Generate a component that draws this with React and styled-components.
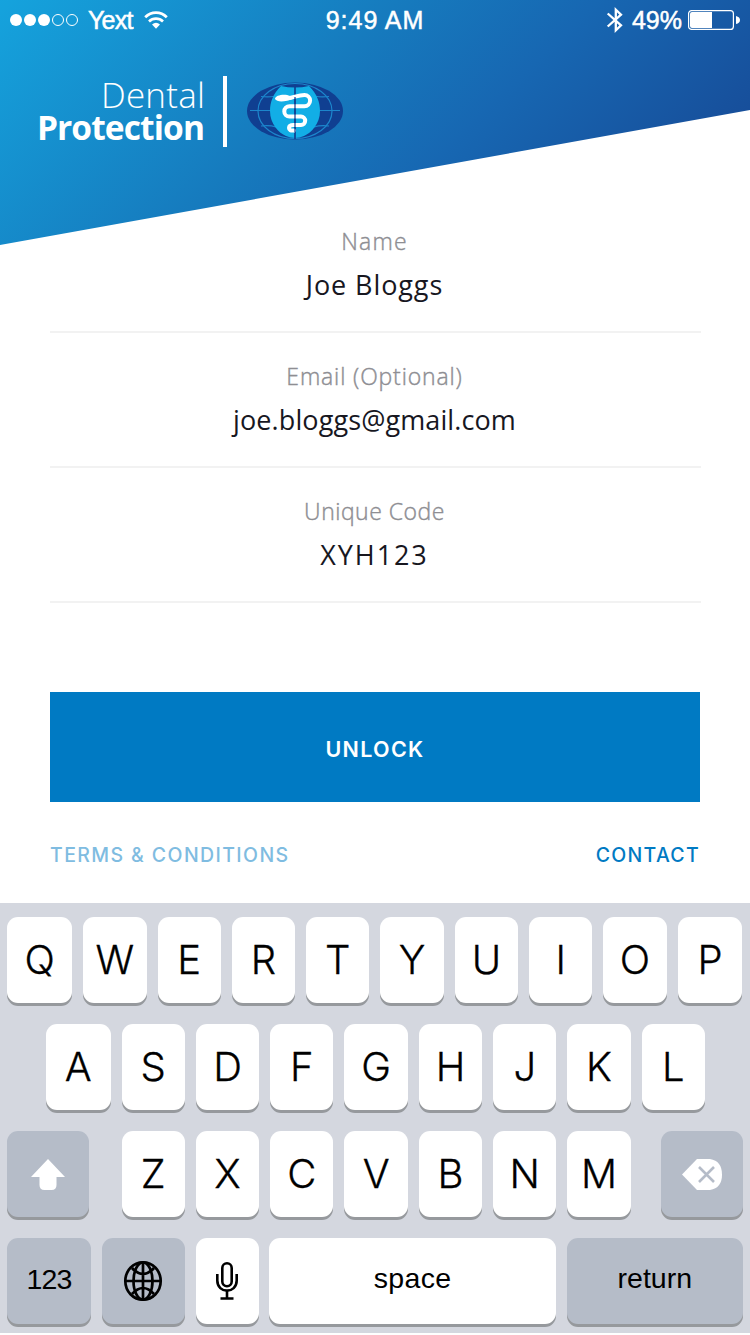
import React from "react";
import styled, { createGlobalStyle } from "styled-components";

const Global = createGlobalStyle`
  *, *::before, *::after { box-sizing: border-box; }
  body { margin: 0; background: #fff; overflow: hidden; }
  button { font: inherit; border: 0; padding: 0; margin: 0; }
`;

const brand = `"Open Sans", "Noto Sans", sans-serif`;
const caps = `Inter, "Open Sans", sans-serif`;
const system = `"Liberation Sans", Arial, sans-serif`;

const Screen = styled.main`
  width: 750px;
  height: 1335px;
  display: flex;
  flex-direction: column;
  background: #fff;
  font-family: ${brand};
`;

const Header = styled.header`
  height: 245px;
  flex: none;
  color: #fff;
  background: linear-gradient(135deg, #15a3dd 0%, #167bbe 40%, #1767b2 60%, #174f9b 86%, #174690 100%);
  clip-path: polygon(0 0, 100% 0, 100% 110px, 0 100%);
`;

const StatusBar = styled.div`
  height: 40px;
  display: grid;
  grid-template-columns: 1fr auto 1fr;
  align-items: center;
  padding: 0 10px;
  font: 25px/40px ${system};
  -webkit-text-stroke: 0.5px #fff;
`;

const StatusGroup = styled.div`
  display: flex;
  align-items: center;
  justify-content: ${(p) => (p.$end ? "flex-end" : "flex-start")};
`;

const StatusText = styled.span`
  letter-spacing: ${(p) => p.$track || 0}px;
  margin: 0 ${(p) => p.$right || 0}px 0 ${(p) => p.$left || 0}px;
`;

const Icon = styled.svg`
  display: block;
  flex: none;
  overflow: visible;
  margin-top: ${(p) => p.$top || 0}px;
  margin-right: ${(p) => p.$right || 0}px;
`;

const BrandRow = styled.div`
  display: flex;
  align-items: flex-start;
  padding: 36px 0 0 38px;
`;

const BrandName = styled.div`
  width: 167px;
  padding-top: 3px;
  display: flex;
  flex-direction: column;
  align-items: flex-end;
`;

const BrandWord = styled.span`
  font-size: ${(p) => (p.$strong ? 33.5 : 35)}px;
  font-weight: ${(p) => (p.$strong ? 700 : 300)};
  line-height: 32px;
  letter-spacing: ${(p) => p.$track}px;
  margin-right: ${(p) => p.$nudge || 0}px;
  white-space: nowrap;
`;

const BrandRule = styled.div`
  width: 4px;
  height: 71px;
  margin: 0 20px 0 18px;
  background: #fff;
`;

const Form = styled.form`
  margin: -47px 49px 0 50px;
  display: flex;
  flex-direction: column;
  position: relative;
`;

const Field = styled.label`
  height: 135px;
  padding: 28px 2px 0 0;
  display: flex;
  flex-direction: column;
  align-items: center;
  border-bottom: 2px solid #f2f2f2;
`;

const FieldLabel = styled.span`
  font-size: 23px;
  line-height: 31px;
  color: #8e8e93;
  font-weight: 300;
  -webkit-text-stroke: 0.4px #8e8e93;
  letter-spacing: ${(p) => p.$track}px;
`;

const FieldValue = styled.span`
  font-size: 27px;
  line-height: 40px;
  margin-top: 8px;
  color: #17171f;
  letter-spacing: ${(p) => p.$track}px;
`;

const UnlockButton = styled.button`
  width: 650px;
  height: 110px;
  margin-top: 89px;
  background: #007ac3;
  color: #fff;
  font-family: ${caps};
  font-size: 21.5px;
  font-weight: 600;
  letter-spacing: 1.3px;
  padding: 3px 0 0 0;
`;

const Links = styled.nav`
  display: flex;
  justify-content: space-between;
  margin-top: 37px;
  padding-right: 1px;
  font-family: ${caps};
  font-size: 19.5px;
  line-height: 32px;
`;

const Link = styled.a`
  color: ${(p) => (p.$muted ? "#7fbce1" : "#007ac3")};
  font-weight: 500;
  letter-spacing: ${(p) => p.$track}px;
`;

const Keyboard = styled.section`
  margin-top: 31.5px;
  height: 430.5px;
  padding: 14.5px 7.3px 0;
  background: #d4d7df;
  display: flex;
  flex-direction: column;
  gap: 21px;
`;

const KeyRow = styled.div`
  display: flex;
  gap: 11px;
  padding-left: ${(p) => p.$indent || 0}px;
`;

const Key = styled.button`
  width: ${(p) => p.$w || 63.3}px;
  height: 86px;
  flex: none;
  display: flex;
  align-items: center;
  justify-content: center;
  margin-left: ${(p) => p.$left || 0}px;
  border-radius: 11px;
  color: #000;
  background: ${(p) => (p.$dark ? "#b5bcc8" : "#fff")};
  box-shadow: 0 3px 0 #96999d;
  font-family: Inter, ${system};
  font-weight: 300;
  font-size: 40px;
  line-height: 84px;
  padding-bottom: 1px;
  -webkit-text-stroke: 0.3px #000;
`;

const WordKey = styled(Key)`
  font-family: ${system};
  font-size: 28.5px;
  -webkit-text-stroke: 0;
  letter-spacing: ${(p) => p.$track || 0}px;
  padding-bottom: ${(p) => p.$lift || 7}px;
`;

const BrandMark = () => (
  <Icon width="96" height="58" viewBox="0 0 96 58" $top={6}>
    <ellipse cx="48" cy="29" rx="48" ry="28.5" fill="#103f91" />
    <g fill="none" stroke="#1c86cc" strokeWidth="1.2">
      <ellipse cx="48" cy="29" rx="37" ry="27.5" />
      <path d="M3 28.5H93M14 14.5Q26 16 34 12M82 14.5Q70 16 62 12M14 44Q27 42 38 49M82 44Q69 42 58 49" />
    </g>
    <path d="M34 4Q48 7 62 4C70 12 73 20 73 29C73 42 64 51 57 54Q48 58 39 54C32 51 23 42 23 29C23 20 26 12 34 4Z" fill="#12aee6" />
    <path d="M48 5V57" stroke="#103f91" strokeWidth="1.7" />
    <path d="M38 16.500C46 16.500 50 13 57.500 13A5.600 5.600 0 0 1 57.500 24.200H42.500A5.200 5.200 0 0 0 42.500 34.600H54A4.200 4.200 0 0 1 54 43H46.500Q42 43 42 46Q42 49 47 48.500" fill="none" stroke="#fff" strokeWidth="4" strokeLinecap="round" />
    <path d="M28 17C28 13 38 11.5 43 14L46 17C38 20 30 20.5 28 17Z" fill="#fff" />
    <path d="M48 15V50" stroke="#103f91" strokeWidth="1.2" />
  </Icon>
);

const Signal = () => (
  <Icon width="68" height="12" viewBox="0 0 68 12" $right={10}>
    {[6, 20, 34].map((x) => <circle key={x} cx={x} cy="6" r="6" fill="#fff" />)}
    {[48, 62].map((x) => <circle key={x} cx={x} cy="6" r="5.5" fill="none" stroke="#fff" strokeWidth="1" />)}
  </Icon>
);

const Wifi = () => (
  <Icon width="24" height="18" viewBox="0 0 24 18">
    <g fill="none" stroke="#fff" strokeWidth="2.7">
      <path d="M1.2 6.2C7.3 0 16.7 0 22.8 6.2" />
      <path d="M5 10.4C9 6.6 15 6.6 19 10.4" />
    </g>
    <path d="M8 13.5Q12 10 16 13.5L12 17.8Z" fill="#fff" />
  </Icon>
);

const Bluetooth = () => (
  <Icon width="16" height="26" viewBox="0 0 16 26" $right={10}>
    <path d="M1.700 6.5L15 18.3L9.800 23.3V2.7L15 7.7L1.700 19.5" fill="none" stroke="#fff" strokeWidth="2.3" />
  </Icon>
);

const Battery = () => (
  <Icon width="52" height="20" viewBox="0 0 52 20">
    <rect x="0.6" y="0.6" width="44.8" height="18.8" rx="3" fill="none" stroke="#fff" strokeWidth="1.2" />
    <path d="M4 2H24V18H4Q2 18 2 16V4Q2 2 4 2Z" fill="#fff" />
    <path d="M48 6Q52 7 52 10Q52 13 48 14Z" fill="#fff" />
  </Icon>
);

const Shift = () => (
  <Icon width="34" height="31" viewBox="0 0 34 31" $top={1}>
    <path d="M17 0L34 18H25.5V26Q25.5 31 20.5 31H13.5Q8.5 31 8.5 26V18H0Z" fill="#fff" />
  </Icon>
);

const Backspace = () => (
  <Icon width="40" height="31" viewBox="0 0 40 31" $top={1}>
    <path d="M15 0H28Q40 2 40 15.5Q40 29 28 31H15L0 15.5Z" fill="#fff" />
    <path d="M17 8L32 23M32 8L17 23" stroke="#b5bcc8" strokeWidth="2.6" />
  </Icon>
);

const Globe = () => (
  <Icon width="38" height="40" viewBox="0 0 38 40">
    <g fill="none" stroke="#000" strokeWidth="2.7">
      <ellipse cx="19" cy="20" rx="17.7" ry="18.7" />
      <ellipse cx="19" cy="20" rx="9.5" ry="18.7" />
      <path d="M19 1V39M1 20H37M8 7Q19 19 30 7M8 33Q19 21 30 33" />
    </g>
  </Icon>
);

const Mic = () => (
  <Icon width="22" height="38" viewBox="0 0 22 38" $right={1}>
    <g fill="none" stroke="#000" strokeWidth="2.6">
      <rect x="6.3" y="1.3" width="9.4" height="23" rx="4.7" />
      <path d="M1.3 12V18.5C1.3 32 20.7 32 20.7 18.5V12M11 29V36M4.5 36.5H17.5" />
    </g>
  </Icon>
);

const fields = [
  { label: "Name", value: "Joe Bloggs", lt: 1.2, vt: 0.9 },
  { label: "Email (Optional)", value: "joe.bloggs@gmail.com", lt: 0.85, vt: 0.1 },
  { label: "Unique Code", value: "XYH123", lt: 0.5, vt: 1.9 },
];

export default function App() {
  return (
    <Screen>
      <Global />
      <Header>
        <StatusBar>
          <StatusGroup>
            <Signal />
            <StatusText $right={11} $track={-0.8}>Yext</StatusText>
            <Wifi />
          </StatusGroup>
          <StatusText $track={1}>9:49 AM</StatusText>
          <StatusGroup $end>
            <Bluetooth />
            <StatusText $right={6}>49%</StatusText>
            <Battery />
          </StatusGroup>
        </StatusBar>
        <BrandRow>
          <BrandName>
            <BrandWord $track={0.2}>Dental</BrandWord>
            <BrandWord $strong $track={-0.9} $nudge={1}>Protection</BrandWord>
          </BrandName>
          <BrandRule />
          <BrandMark />
        </BrandRow>
      </Header>
      <Form>
        {fields.map((f) => (
          <Field key={f.label}>
            <FieldLabel $track={f.lt}>{f.label}</FieldLabel>
            <FieldValue $track={f.vt}>{f.value}</FieldValue>
          </Field>
        ))}
        <UnlockButton type="button">UNLOCK</UnlockButton>
        <Links>
          <Link $muted $track={1.4}>TERMS &amp; CONDITIONS</Link>
          <Link $track={1.3}>CONTACT</Link>
        </Links>
      </Form>
      <Keyboard>
        <KeyRow>
          {[..."QWERTYUIOP"].map((c) => (
            <Key key={c} $w={c === "Q" ? 65 : undefined} $left={c === "P" ? 0.7 : 0}>{c}</Key>
          ))}
        </KeyRow>
        <KeyRow $indent={38.3}>
          {[..."ASDFGHJKL"].map((c) => (
            <Key key={c} $w={c === "A" ? 65 : undefined}>{c}</Key>
          ))}
        </KeyRow>
        <KeyRow>
          <Key $dark $w={82}><Shift /></Key>
          {[..."ZXCVBNM"].map((c) => (
            <Key key={c} $left={c === "Z" ? 21.3 : 0}>{c}</Key>
          ))}
          <Key $dark $w={82} $left={19.5}><Backspace /></Key>
        </KeyRow>
        <KeyRow>
          <WordKey $dark $w={83.5} $track={-0.8} $lift={5}>123</WordKey>
          <Key $dark $w={83}><Globe /></Key>
          <Key><Mic /></Key>
          <WordKey $w={287} $left={-1} $track={0.3}>space</WordKey>
          <WordKey $dark $w={175.5}>return</WordKey>
        </KeyRow>
      </Keyboard>
    </Screen>
  );
}
